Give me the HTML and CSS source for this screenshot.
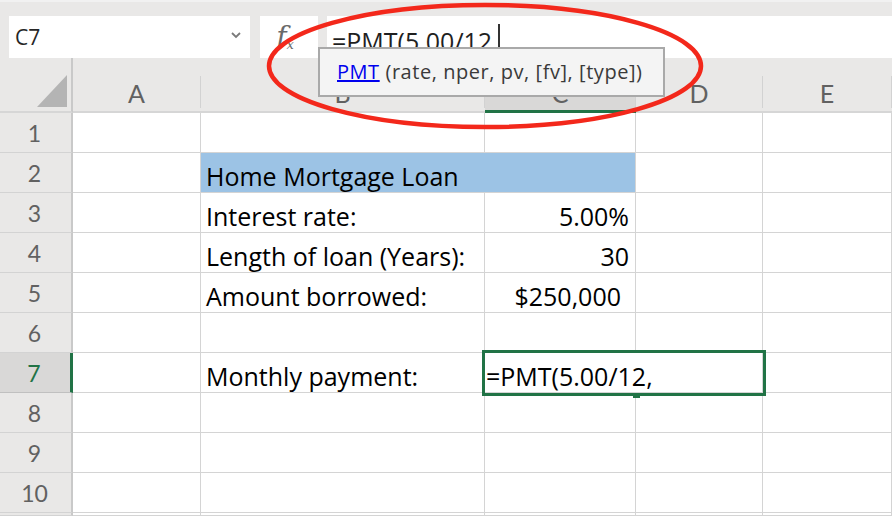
FILE: index.html
```html
<!DOCTYPE html>
<html lang="en">
<head>
    <meta charset="UTF-8">
    <title>Home Mortgage Loan - PMT</title>
    <link rel="stylesheet" href="styles.css">
</head>
<body>
<div class="app">
    <div class="toolbar">
        <div class="namebox">
            <span class="ref">C7</span>
            <svg class="chev" width="12" height="8" viewBox="0 0 12 8"><path d="M2 2 L6 6 L10 2" fill="none" stroke="#7a7a7a" stroke-width="1.8"/></svg>
        </div>
        <div class="fxbox"><span class="fx">f<small>x</small></span></div>
        <div class="formula">=PMT(5.00/12<span class="caret"></span></div>
    </div>

    <div class="sheet">
        <div class="corner"><span class="tri"></span></div>
        <div class="colhead"><span>A</span></div>
        <div class="colhead"><span>B</span></div>
        <div class="colhead sel"><span>C</span></div>
        <div class="colhead"><span>D</span></div>
        <div class="colhead"><span>E</span></div>

        <div class="rowhead">1</div>
        <div class="cell"></div><div class="cell"></div><div class="cell"></div><div class="cell"></div><div class="cell"></div>

        <div class="rowhead">2</div>
        <div class="cell"></div>
        <div class="cell title">Home Mortgage Loan</div>
        <div class="cell title"></div>
        <div class="cell"></div><div class="cell"></div>

        <div class="rowhead">3</div>
        <div class="cell"></div>
        <div class="cell">Interest rate:</div>
        <div class="cell num">5.00%</div>
        <div class="cell"></div><div class="cell"></div>

        <div class="rowhead">4</div>
        <div class="cell"></div>
        <div class="cell">Length of loan (Years):</div>
        <div class="cell num">30</div>
        <div class="cell"></div><div class="cell"></div>

        <div class="rowhead">5</div>
        <div class="cell"></div>
        <div class="cell">Amount borrowed:</div>
        <div class="cell num money">$250,000</div>
        <div class="cell"></div><div class="cell"></div>

        <div class="rowhead">6</div>
        <div class="cell"></div><div class="cell"></div><div class="cell"></div><div class="cell"></div><div class="cell"></div>

        <div class="rowhead sel">7</div>
        <div class="cell"></div>
        <div class="cell">Monthly payment:</div>
        <div class="cell active">=PMT(5.00/12,<span class="handle"></span></div>
        <div class="cell"></div>

        <div class="rowhead">8</div>
        <div class="cell"></div><div class="cell"></div><div class="cell"></div><div class="cell"></div><div class="cell"></div>

        <div class="rowhead">9</div>
        <div class="cell"></div><div class="cell"></div><div class="cell"></div><div class="cell"></div><div class="cell"></div>

        <div class="rowhead">10</div>
        <div class="cell"></div><div class="cell"></div><div class="cell"></div><div class="cell"></div><div class="cell"></div>

        <!-- top sliver of row 11 -->
        <div class="rowhead"></div>
        <div class="cell"></div><div class="cell"></div><div class="cell"></div><div class="cell"></div><div class="cell"></div>
    </div>

    <div class="tip"><a href="#">PMT</a> (rate, nper, pv, [fv], [type])</div>

    <svg class="ring" width="892" height="516" viewBox="0 0 892 516">
        <ellipse cx="485" cy="66" rx="216" ry="61" fill="none" stroke="#f3281b" stroke-width="4.5"/>
    </svg>
</div>
</body>
</html>
```

FILE: styles.css
```css
html,body{margin:0;padding:0;}
body{width:892px;height:516px;overflow:hidden;background:#e9e8e7;font-family:Lato,"Liberation Sans",sans-serif;}
.app{position:relative;width:892px;height:516px;overflow:hidden;}

/* formula bar */
.toolbar{display:flex;height:58px;box-sizing:border-box;padding:14px 0 0 9px;border-top:2px solid #f1f1f1;}
.namebox{width:241px;background:#fff;display:flex;align-items:center;justify-content:space-between;padding:0 8px 0 6px;box-sizing:border-box;}
.namebox .ref{font:21px "Open Sans",sans-serif;color:#262626;}
.chev{margin-top:-4px;}
.fxbox{width:58px;margin-left:10px;background:#fff;display:flex;align-items:center;justify-content:center;}
.fx{font:italic 28px "DejaVu Serif",serif;color:#6a6a6a;padding-right:8px;line-height:30px;}
.fx small{font:italic 13px "DejaVu Serif",serif;vertical-align:-3px;}
.formula{flex:1;margin-left:9px;background:#fff;display:flex;align-items:center;padding:7px 0 0 5px;font:25px "Open Sans",sans-serif;color:#1f1f1f;}
.caret{display:inline-block;width:1.5px;height:27px;background:#333;margin:-6px 0 0 6px;}

/* grid */
.sheet{display:grid;grid-template-columns:73px 128px 284px 151px 127px 129px;grid-template-rows:55px repeat(10,40px) 3px;}
.corner{border-right:2px solid #c9c9c9;border-bottom:2px solid #d6d6d6;display:flex;justify-content:flex-end;align-items:flex-end;padding:0 4px 4px 0;}
.tri{width:0;height:0;border-style:solid;border-width:0 0 32px 30px;border-color:transparent transparent #b4b4b4 transparent;}
.colhead{display:flex;align-items:flex-end;border-bottom:2px solid #d6d6d6;}
.colhead span{flex:1;height:32px;margin-bottom:3px;border-right:1px solid #d2d2d2;text-align:center;font-size:25px;line-height:34px;color:#616161;}
.colhead.sel{background:#d9d8d7;border-bottom:3px solid #217346;}
.colhead.sel span{margin-bottom:2px;}
.rowhead{border-right:2px solid #c9c9c9;border-bottom:1px solid #d3d3d3;text-align:center;font-size:23px;line-height:40px;color:#616161;padding-right:2px;}
.rowhead.sel{background:#d9d8d7;color:#217346;border-right:3px solid #217346;border-bottom-color:#c0c0c0;}
.cell{background:#fff;border-right:1px solid #d4d4d4;border-bottom:1px solid #d4d4d4;font:25px "Open Sans",sans-serif;line-height:46px;color:#000;padding-left:5px;white-space:nowrap;overflow:hidden;}
.cell.num{text-align:right;padding-right:6px;}
.cell.money{padding-right:14px;}
.cell.title{background:#9cc3e5;border-right:0;}
.cell.title + .cell.title{border-right:1px solid #d4d4d4;}
.cell.active{grid-column:span 2;position:relative;overflow:visible;outline:3px solid #217346;padding-left:1px;}
.handle{position:absolute;left:148px;bottom:-6px;width:7px;height:3px;background:#217346;}

/* function hint */
.tip{position:absolute;left:318px;top:47px;width:347px;height:50px;box-sizing:border-box;background:#f4f4f4;border:2px solid #a9a9a9;padding-left:17px;font:20px "Open Sans",sans-serif;letter-spacing:0.55px;line-height:46px;color:#3a3a3a;}
.tip a{color:#0000ee;text-decoration:underline;}
.ring{position:absolute;left:0;top:0;pointer-events:none;}
```
